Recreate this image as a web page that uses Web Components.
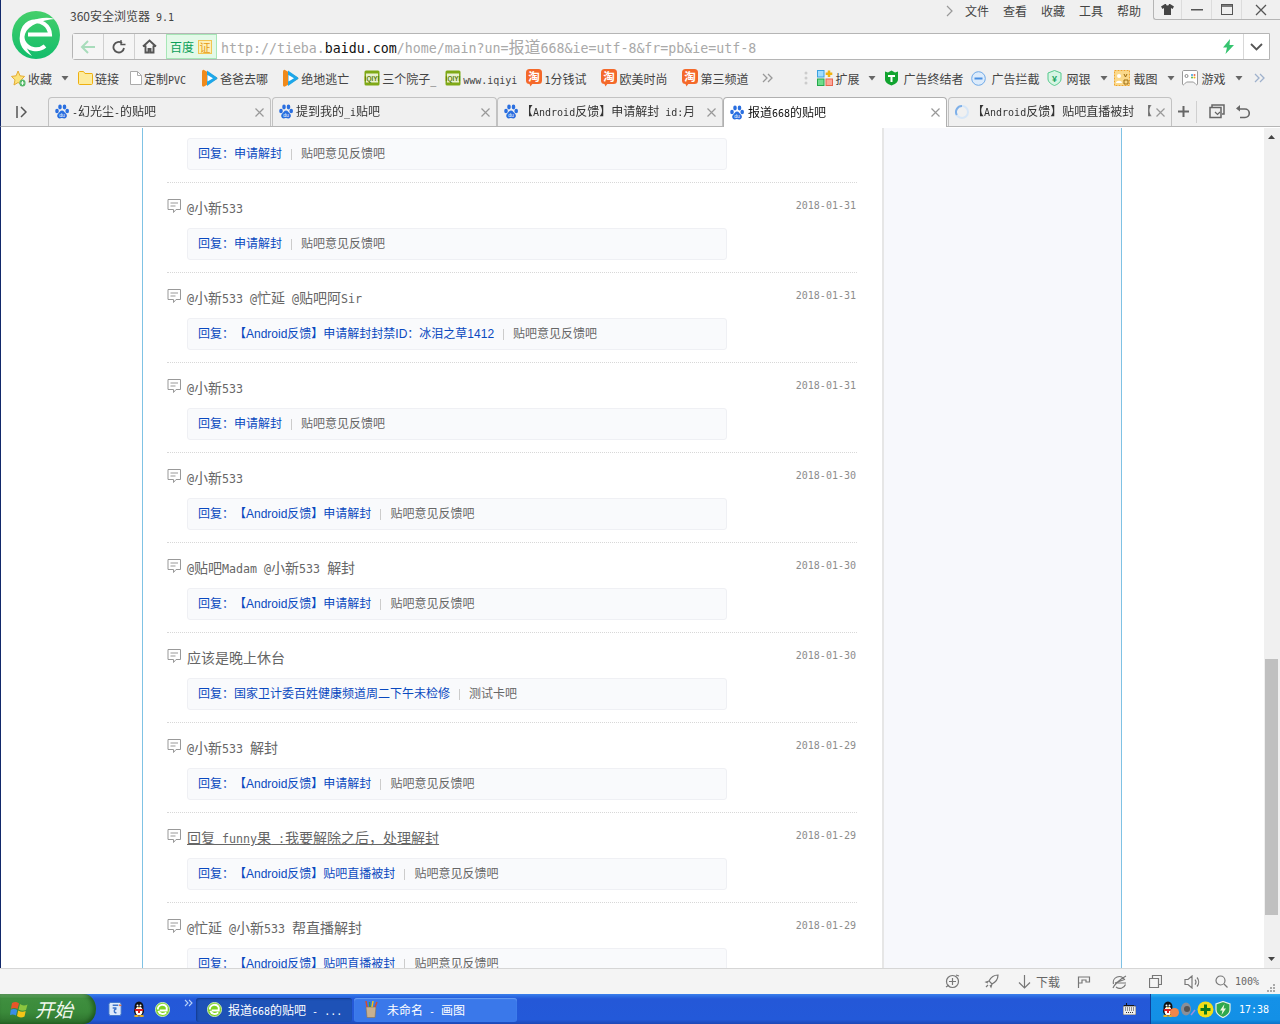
<!DOCTYPE html>
<html lang="zh">
<head>
<meta charset="utf-8">
<title>报道668的贴吧</title>
<style>
html, body { margin: 0; padding: 0; }
body {
  width: 1280px; height: 1024px; overflow: hidden;
  display: flex; flex-direction: column;
  font: 12px "Noto Sans CJK SC", sans-serif; color: #444;
  text-spacing-trim: space-all;
}
.m { font: 10px "DejaVu Sans Mono", monospace; white-space: pre; }
.t .m { font-size: 11.65px; }
.s { font-family: "Liberation Sans", "Noto Sans CJK SC", sans-serif; }
.u { text-decoration: underline; }
a-link { color: #0a49bf; }
</style>
</head>
<body>
<title-strip></title-strip>
<fav-bar>
  <fav-item icon="star" text="收藏" caret="1" style="margin-left:10px"></fav-item>
  <fav-item icon="folder" text="链接" style="margin-left:8px"></fav-item>
  <fav-item icon="file" text="定制PVC" style="margin-left:11px"></fav-item>
  <fav-item icon="video" text="爸爸去哪" style="margin-left:15px"></fav-item>
  <fav-item icon="video" text="绝地逃亡" style="margin-left:14px"></fav-item>
  <fav-item icon="iqiyi" text="三个院子_" style="margin-left:15px"></fav-item>
  <fav-item icon="iqiyi" text="www.iqiyi" style="margin-left:9px"></fav-item>
  <fav-item icon="tao" text="1分钱试" style="margin-left:9px"></fav-item>
  <fav-item icon="tao" text="欧美时尚" style="margin-left:15px"></fav-item>
  <fav-item icon="tao" text="第三频道" style="margin-left:15px"></fav-item>
  <fav-item icon="more" style="margin-left:14px"></fav-item>
  <fav-item icon="dots" style="margin-left:31px"></fav-item>
  <fav-item icon="ext" text="扩展" caret="1" style="margin-left:9px"></fav-item>
  <fav-item icon="shield" text="广告终结者" style="margin-left:7px;--tgap:4px"></fav-item>
  <fav-item icon="minus" text="广告拦截" style="margin-left:8px;--tgap:5px"></fav-item>
  <fav-item icon="bank" text="网银" caret="1" style="margin-left:7px;--tgap:5px"></fav-item>
  <fav-item icon="shot" text="截图" caret="1" style="margin-left:5px;--tgap:4px"></fav-item>
  <fav-item icon="game" text="游戏" caret="1" style="margin-left:6px;--tgap:4px"></fav-item>
  <fav-item icon="more2" style="margin-left:10px"></fav-item>
</fav-bar>
<tab-strip>
  <tab-item icon="paw" text="-幻光尘-的贴吧" style="width:223px;margin-left:0"></tab-item>
  <tab-item icon="paw" text="提到我的_i贴吧" style="width:225px;margin-left:1px"></tab-item>
  <tab-item icon="paw" text="【Android反馈】申请解封 id:月" style="width:226px;margin-left:0"></tab-item>
  <tab-item icon="paw" text="报道668的贴吧" active style="width:224px;margin-left:0"></tab-item>
  <tab-item icon="spin" text="【Android反馈】贴吧直播被封 【" style="width:224px;margin-left:1px"></tab-item>
</tab-strip>
<page-view>
  <feed-item clipped>
    <a-link slot="link">回复：申请解封</a-link><span slot="forum">贴吧意见反馈吧</span>
  </feed-item>
  <feed-item date="2018-01-31">
    <span class="t"><span class="m">@</span>小新<span class="m">533</span></span>
    <a-link slot="link">回复：申请解封</a-link><span slot="forum">贴吧意见反馈吧</span>
  </feed-item>
  <feed-item date="2018-01-31">
    <span class="t"><span class="m">@</span>小新<span class="m">533 @</span>忙延<span class="m"> @</span>贴吧阿<span class="m">Sir</span></span>
    <a-link slot="link" class="s">回复：【Android反馈】申请解封封禁ID：冰泪之草1412</a-link><span slot="forum">贴吧意见反馈吧</span>
  </feed-item>
  <feed-item date="2018-01-31">
    <span class="t"><span class="m">@</span>小新<span class="m">533</span></span>
    <a-link slot="link">回复：申请解封</a-link><span slot="forum">贴吧意见反馈吧</span>
  </feed-item>
  <feed-item date="2018-01-30">
    <span class="t"><span class="m">@</span>小新<span class="m">533</span></span>
    <a-link slot="link" class="s">回复：【Android反馈】申请解封</a-link><span slot="forum">贴吧意见反馈吧</span>
  </feed-item>
  <feed-item date="2018-01-30">
    <span class="t"><span class="m">@</span>贴吧<span class="m">Madam @</span>小新<span class="m">533 </span>解封</span>
    <a-link slot="link" class="s">回复：【Android反馈】申请解封</a-link><span slot="forum">贴吧意见反馈吧</span>
  </feed-item>
  <feed-item date="2018-01-30">
    <span class="t">应该是晚上休台</span>
    <a-link slot="link">回复：国家卫计委百姓健康频道周二下午未检修</a-link><span slot="forum">测试卡吧</span>
  </feed-item>
  <feed-item date="2018-01-29">
    <span class="t"><span class="m">@</span>小新<span class="m">533 </span>解封</span>
    <a-link slot="link" class="s">回复：【Android反馈】申请解封</a-link><span slot="forum">贴吧意见反馈吧</span>
  </feed-item>
  <feed-item date="2018-01-29">
    <span class="t u">回复<span class="m"> funny</span>果<span class="m"> :</span>我要解除之后，处理解封</span>
    <a-link slot="link" class="s">回复：【Android反馈】贴吧直播被封</a-link><span slot="forum">贴吧意见反馈吧</span>
  </feed-item>
  <feed-item date="2018-01-29">
    <span class="t"><span class="m">@</span>忙延<span class="m"> @</span>小新<span class="m">533 </span>帮直播解封</span>
    <a-link slot="link" class="s">回复：【Android反馈】贴吧直播被封</a-link><span slot="forum">贴吧意见反馈吧</span>
  </feed-item>
</page-view>
<status-strip></status-strip>
<task-bar></task-bar>

<script>
// latin runs get the narrow mono face, like the bitmap font on the original
function mix(s) {
  return s.replace(/[\x20-\x7e]+/g, m => `<span class="m">${m}</span>`);
}
const monoCss = `.m{font-family:"DejaVu Sans Mono",monospace;font-size:10px;white-space:pre}`;

const logo = (s) => `<svg width="${s}" height="${s}" viewBox="0 0 48 48">
  <defs><linearGradient id="lg" x1="0" y1="0" x2="0" y2="1"><stop offset="0" stop-color="#45cf6a"/><stop offset="1" stop-color="#12bd6c"/></linearGradient></defs>
  <circle cx="24" cy="24" r="24" fill="url(#lg)"/>
  <path d="M16 23.500H38A14 14 0 1 0 33 35" fill="none" stroke="#fff" stroke-width="4"/>
  <path d="M43 8C30 4 12 10 8 24c-2 9 4 17 12 21-6-7-9-15-7-22C16 14 30 9 43 8z" fill="#fff"/>
</svg>`;

const paw = `<svg width="16" height="16" viewBox="0 0 16 16" fill="#2a6fe0"><ellipse cx="3" cy="7" rx="1.800" ry="2.300"/><ellipse cx="6" cy="3" rx="1.800" ry="2.400"/><ellipse cx="10.500" cy="3" rx="1.800" ry="2.400"/><ellipse cx="13.200" cy="7" rx="1.800" ry="2.300"/><path d="M8 6.500c-2 0-2.500 2-4 3.300-1.500 1.500-.8 4.700 1.800 4.700 1 0 1.500-.4 2.200-.4s1.300.4 2.300.4c2.600 0 3.300-3.200 1.800-4.700C10.600 8.500 10 6.500 8 6.500z"/><text x="8" y="13" font-size="5" text-anchor="middle" fill="#fff" font-family="Liberation Sans">du</text></svg>`;
const spin = `<svg width="16" height="16" viewBox="0 0 16 16" fill="none"><circle cx="8" cy="8" r="6" stroke="#d6e6f7" stroke-width="2"/><path d="M8 2a6 6 0 0 0-5.200 9" stroke="#7fb0e8" stroke-width="2"/></svg>`;
const caret = `<svg width="10" height="5" viewBox="0 0 10 5"><path d="M1.500 0h7L5 4.500z" fill="#666"/></svg>`;
const play = `<svg width="17" height="18" viewBox="0 0 17 18"><path d="M3 1l13 7.500a1 1 0 0 1 0 1.500L3 17.500C1.500 18 1 17 1 16V3c0-1.500 1-2.500 2-2z" fill="#f08a1c"/><path d="M6 1.500l10 7a1 1 0 0 1 0 1.500L6 17z" fill="#1da7ea"/><path d="M6.500 6l5.500 3.200L6.500 12.500z" fill="#fff"/></svg>`;
const iqiyi = `<svg width="16" height="16" viewBox="0 0 16 16"><rect x=".5" y=".5" width="15" height="15" rx="1.500" fill="#7fa916"/><rect x="2" y="3.500" width="12" height="9" fill="#e9f0cf"/><text x="8" y="10.500" font-size="6.500" text-anchor="middle" fill="#5a7d08" font-family="Liberation Sans" font-weight="bold">iQIYI</text></svg>`;
const tao = `<svg width="16" height="18" viewBox="0 0 16 18"><rect width="16" height="15" rx="3.500" fill="#f4692a"/><path d="M3 14h4l-2.500 3.500z" fill="#f4692a"/><text x="8" y="12" font-size="11.500" text-anchor="middle" fill="#fff" font-family="Noto Sans CJK SC" font-weight="bold">淘</text></svg>`;
const favIcons = {
  star: `<svg width="15" height="17" viewBox="0 0 17 17" preserveAspectRatio="none"><path d="M8 1l2.200 4.800 5.200.6-3.900 3.500 1.100 5.100L8 12.500 3.400 15l1.100-5.100L.6 6.400l5.200-.6z" fill="#fbe27a" stroke="#e3a72a"/><circle cx="13" cy="13" r="3.500" fill="#55b96a"/><path d="M13 11v4M11 13h4" stroke="#fff"/></svg>`,
  folder: `<svg width="15" height="14" viewBox="0 0 15 14"><path d="M.5 2c0-1 .5-1.500 1.500-1.500h3.500L7 2.500h7c.5 0 .5.500.5 1v9c0 .5-.5 1-1 1h-12c-.5 0-1-.5-1-1z" fill="#fdeb9c" stroke="#eeb011"/></svg>`,
  file: `<svg width="12" height="14" viewBox="0 0 12 14"><path d="M.5.500h7l4 4v9H.5z" fill="#fff" stroke="#aaa"/><path d="M7.500.500v4h4" fill="none" stroke="#aaa"/></svg>`,
  video: play, iqiyi, tao,
  more: `<svg width="11" height="10" viewBox="0 0 11 10" fill="none" stroke="#999" stroke-width="1.300"><path d="M1 1l4 4-4 4M6 1l4 4-4 4"/></svg>`,
  more2: `<svg width="11" height="10" viewBox="0 0 11 10" fill="none" stroke="#9fb1cc" stroke-width="1.300"><path d="M1 1l4 4-4 4M6 1l4 4-4 4"/></svg>`,
  dots: `<svg width="4" height="14" viewBox="0 0 4 14" fill="#ccc"><circle cx="2" cy="2" r="1.500"/><circle cx="2" cy="7" r="1.500"/><circle cx="2" cy="12" r="1.500"/></svg>`,
  ext: `<svg width="16" height="16" viewBox="0 0 16 16"><rect x=".5" y=".5" width="6.500" height="6.500" fill="#9fdcff" stroke="#3aa0e0"/><rect x=".5" y="9" width="6.500" height="6.500" fill="#6fdc8c" stroke="#25a84c"/><rect x="9" y="9" width="6.500" height="6.500" fill="#fca79a" stroke="#e8654f"/><path d="M12 .5v6.500M8.700 3.700h6.600" stroke="#f0b310" stroke-width="2.500"/></svg>`,
  shield: `<svg width="15" height="16" viewBox="0 0 15 16"><path d="M1 1.500l3 1 3.500-2 3.500 2 3-1v8c0 3-3.500 5-6.500 6-3-1-6.500-3-6.500-6z" fill="#11a32f"/><path d="M4 5h7v2H8.500v5h-2V7H4z" fill="#fff"/></svg>`,
  minus: `<svg width="15" height="15" viewBox="0 0 15 15"><circle cx="7.500" cy="7.500" r="6.800" fill="#dcebfb" stroke="#6ea9e8"/><rect x="3.500" y="6.500" width="8" height="2" fill="#4a90e2"/></svg>`,
  bank: `<svg width="15" height="16" viewBox="0 0 15 16"><path d="M7.500.500l6.500 2.500v6c0 3-3.500 5.500-6.500 6.500C4.500 14.500 1 12 1 9V3z" fill="#d7f5e4" stroke="#55c98c"/><text x="7.500" y="11.500" font-size="9" text-anchor="middle" fill="#1aa45f" font-family="Liberation Sans" font-weight="bold">¥</text></svg>`,
  shot: `<svg width="16" height="16" viewBox="0 0 16 16"><rect x=".5" y=".5" width="15" height="15" fill="#fbd98a" stroke="#f0a52a" stroke-dasharray="2 1"/><circle cx="5" cy="6" r="2" fill="#fff"/><path d="M2 13c0-3 6-3 6 0z" fill="#fff"/><path d="M10 4l1.500 3L13 4M10 10h4v4h-4z" fill="none" stroke="#9a6a10"/></svg>`,
  game: `<svg width="16" height="16" viewBox="0 0 16 16"><path d="M2 .5h12c1 0 1.500.5 1.500 1.500v12c0 .8-1 1.200-1.500.5L11.500 12h-7L2 14.500c-.5.700-1.500.3-1.500-.5V2C.5 1 1 .5 2 .5z" fill="#fff" stroke="#999"/><circle cx="4.500" cy="6" r="1.500" fill="none" stroke="#888"/><circle cx="10" cy="5" r="1" fill="#3aa0e0"/><circle cx="12.500" cy="5" r="1" fill="#e8654f"/><circle cx="10" cy="7.500" r="1" fill="#59b84c"/><circle cx="12.500" cy="7.500" r="1" fill="#f0b310"/></svg>`
};

class TitleStrip extends HTMLElement {
  constructor() {
    super();
    this.attachShadow({ mode: 'open' }).innerHTML = `
    <style>
      ${monoCss}
      :host { display: grid; grid-template-columns: 71px 1fr; grid-template-rows: 33px 27px; height: 60px; background: #f0f0f0; border-left: 1px solid #12296b; box-sizing: border-box; color: #444; font: 12px "Noto Sans CJK SC", sans-serif; }
      .logo { grid-row: 1 / 3; padding: 11px 0 0 11px; }
      .top { display: flex; align-items: flex-start; }
      .name { margin: 7px 0 0 -2px; flex: 1; line-height: 17px; }
      .menu { display: flex; gap: 14px; margin: 2px 12px 0 0; line-height: 17px; align-items: center; }
      .menu svg { margin-right: -2px; }
      .win { display: flex; height: 20px; box-sizing: border-box; border: 1px solid #b5b5b5; border-top: 0; border-right: 0; border-bottom-left-radius: 3px; width: 127px; }
      .win div { display: flex; align-items: center; justify-content: center; border-right: 1px solid #dcdcdc; }
      .win div:last-child { border: 0; flex: 1; }
      .addr { display: flex; align-items: stretch; height: 27px; box-sizing: border-box; margin-right: 10px; border: 1px solid #b5b5b5; border-radius: 3px 0 0 3px; background: #fff; }
      .nav { width: 30px; display: flex; align-items: center; justify-content: center; background: #f5f5f5; border-right: 1px solid #d0d0d0; }
      .nav.home { width: 31px; border: 0; padding-right: 2px; box-sizing: border-box; }
      .badge { display: flex; align-items: center; gap: 4px; width: 51px; box-sizing: border-box; padding-left: 3px; background: #e3f9e8; border: 1px solid #a7e7b7; color: #0b9f57; }
      .cert { width: 14px; height: 14px; line-height: 13px; box-sizing: border-box; text-align: center; font-size: 11px; background: #fdf0b8; border: 1px solid #f2c552; color: #e69a14; }
      .url { flex: 1; padding-left: 4px; font-size: 13.28px; line-height: 24px; color: #a9a9a9; white-space: nowrap; }
      .url .m { font-size: 13.28px; }
      .url b { font-weight: normal; color: #111; }
      .url i { font-style: normal; font-size: 16px; }
      .bolt { display: flex; align-items: center; justify-content: center; width: 29px; }
      .drop { display: flex; align-items: center; justify-content: center; width: 25px; border-left: 1px solid #d8d8d8; }
    </style>
    <div class="logo">${logo(48)}</div>
    <div class="top">
      <div class="name">360安全浏览器<span class="m"> 9.1</span></div>
      <div class="menu">
        <svg width="7" height="12" viewBox="0 0 7 12" fill="none" stroke="#999" stroke-width="1.200"><path d="M1 1l5 5-5 5"/></svg>
        <span>文件</span><span>查看</span><span>收藏</span><span>工具</span><span>帮助</span>
      </div>
      <div class="win">
        <div style="width:27px"><svg width="13" height="11" viewBox="0 0 13 11"><path d="M4 0L0 2.500 1.500 5 3 4v7h7V4l1.500 1L13 2.500 9 0H8a1.500 1.500 0 0 1-3 0z" fill="#444"/></svg></div>
        <div style="width:29px"><svg width="12" height="2" viewBox="0 0 12 2"><rect y="0" width="12" height="1.500" fill="#555"/></svg></div>
        <div style="width:29px"><svg width="12" height="11" viewBox="0 0 12 11" fill="none" stroke="#555"><rect x=".5" y=".5" width="11" height="10"/><path d="M0 2h12" stroke-width="1.500"/></svg></div>
        <div><svg width="12" height="12" viewBox="0 0 12 12" stroke="#555" stroke-width="1.300"><path d="M1 1l10 10M11 1L1 11"/></svg></div>
      </div>
    </div>
    <div class="addr">
      <div class="nav"><svg width="16" height="14" viewBox="0 0 16 14" fill="none" stroke="#a8dcbb" stroke-width="2"><path d="M15 7H2M8 1L2 7l6 6"/></svg></div>
      <div class="nav"><svg width="14" height="14" viewBox="0 0 14 14" fill="none" stroke="#555" stroke-width="1.800"><path d="M12 8a5.300 5.300 0 1 1-2-5"/><path d="M9 0v4.500h4.500" stroke-width="1.300"/></svg></div>
      <div class="nav home"><svg width="15" height="15" viewBox="0 0 15 15" fill="none" stroke="#555" stroke-width="1.900"><path d="M1 7.500L7.500 1.500 14 7.500M3.500 6.500V13.500h3V10h2v3.500h3V6.500"/></svg></div>
      <div class="badge"><span>百度</span><span class="cert">证</span></div>
      <div class="url"><span class="m">http://tieba.<b>baidu.com</b>/home/main?un=</span><i>报道</i><span class="m">668&amp;ie=utf-8&amp;fr=pb&amp;ie=utf-8</span></div>
      <div class="bolt"><svg width="13" height="15" viewBox="0 0 13 15"><path d="M8 0L1 8.500h4L3.500 15 12 6H7.500z" fill="#35c46f"/></svg></div>
      <div class="drop"><svg width="13" height="8" viewBox="0 0 13 8" fill="none" stroke="#555" stroke-width="1.800"><path d="M1 1l5.500 5.500L12 1"/></svg></div>
    </div>`;
  }
}
customElements.define('title-strip', TitleStrip);

class FavBar extends HTMLElement {
  constructor() {
    super();
    this.attachShadow({ mode: 'open' }).innerHTML = `
    <style>:host { display: flex; align-items: center; height: 37px; padding-bottom: 1px; box-sizing: border-box; background: #f0f0f0; border-left: 1px solid #12296b; }</style><slot></slot>`;
  }
}
customElements.define('fav-bar', FavBar);

class FavItem extends HTMLElement {
  connectedCallback() {
    if (this.shadowRoot) return;
    const text = this.getAttribute('text');
    const hasCaret = this.hasAttribute('caret');
    this.attachShadow({ mode: 'open' }).innerHTML = `
    <style>
      ${monoCss}
      :host { display: inline-flex; align-items: center; gap: var(--tgap, 2px); color: #444; font: 12px "Noto Sans CJK SC", sans-serif; white-space: nowrap; flex: none; }
      svg { display: block; }
      .c { margin-left: calc(8px - var(--tgap, 2px)); }
    </style>
    ${favIcons[this.getAttribute('icon')] || ''}
    ${text ? `<span>${mix(text)}</span>` : ''}
    ${hasCaret ? `<span class="c">${caret}</span>` : ''}`;
  }
}
customElements.define('fav-item', FavItem);

class TabStrip extends HTMLElement {
  constructor() {
    super();
    this.attachShadow({ mode: 'open' }).innerHTML = `
    <style>
      :host { display: flex; align-items: flex-end; height: 30px; box-sizing: border-box; background: #f0f0f0; border-left: 1px solid #12296b; border-bottom: 1px solid #b5b5b5; }
      .side { width: 47px; align-self: center; padding-left: 15px; box-sizing: border-box; }
      .tail { display: flex; align-items: center; align-self: center; margin-left: 5px; }
      .div { width: 1px; height: 22px; background: #d0d0d0; margin: 0 12px 0 6px; }
      svg { display: block; }
    </style>
    <div class="side"><svg width="11" height="12" viewBox="0 0 11 12" fill="none" stroke="#555" stroke-width="1.500"><path d="M1 0v12"/><path d="M5 1l5 5-5 5"/></svg></div>
    <slot></slot>
    <div class="tail">
      <svg width="13" height="13" viewBox="0 0 13 13" stroke="#666" stroke-width="2"><path d="M6.500 1v11M1 6.500h11"/></svg>
      <div class="div"></div>
      <svg width="16" height="15" viewBox="0 0 16 15" fill="none" stroke="#666" stroke-width="1.500"><path d="M3 3V1h12v9h-2"/><path d="M1 3.500h11v10H1z"/><path d="M6 8l2.500 2.500L11 8" stroke-width="1.200"/></svg>
      <svg style="margin-left:10px" width="15" height="14" viewBox="0 0 15 14" fill="none" stroke="#666" stroke-width="1.600"><path d="M5 4h5a4 4 0 0 1 0 8.500H5"/><path d="M5 0v6.500L1 3.500z" fill="#666" stroke="none"/></svg>
    </div>`;
  }
}
customElements.define('tab-strip', TabStrip);

class TabItem extends HTMLElement {
  connectedCallback() {
    if (this.shadowRoot) return;
    const icon = this.getAttribute('icon') === 'spin' ? spin : paw;
    this.attachShadow({ mode: 'open' }).innerHTML = `
    <style>
      ${monoCss}
      :host { display: flex; align-items: center; height: 29px; box-sizing: border-box; flex: none; padding-left: 5px; padding-right: 6px; border: 1px solid #c2c2c2; border-bottom: 0; border-radius: 4px 4px 0 0; background: #f0f0f0; color: #333; font: 12px "Noto Sans CJK SC", sans-serif; }
      :host([active]) { background: #fff; color: #111; height: 30px; margin-bottom: -1px; border-color: #b0b0b0; }
      :host([active]) .txt { margin-left: 3px; }
      :host([icon="spin"]) .txt { margin-right: 1px; }
      .txt { flex: 1; min-width: 0; margin-left: 2px; margin-right: 8px; overflow: hidden; white-space: nowrap; line-height: 26px; -webkit-mask-image: linear-gradient(to left, transparent, #000 8px); mask-image: linear-gradient(to left, transparent, #000 8px); }
      svg { display: block; flex: none; }
    </style>
    ${icon}
    <div class="txt">${mix(this.getAttribute('text'))}</div>
    <svg width="9" height="9" viewBox="0 0 9 9" stroke="#999" stroke-width="1.200"><path d="M.5.500l8 8M8.500.500l-8 8"/></svg>`;
  }
}
customElements.define('tab-item', TabItem);

class PageView extends HTMLElement {
  constructor() {
    super();
    this.attachShadow({ mode: 'open' }).innerHTML = `
    <style>
      :host { display: flex; flex: 1; min-height: 0; background: #fff; border-left: 1px solid #12296b; overflow: hidden; }
      .wrap { display: flex; width: 980px; box-sizing: border-box; margin-left: 141px; margin-top: 1px; border-left: 1px solid #7fc2e4; border-right: 1px solid #7fc2e4; }
      .list { width: 690px; margin-left: 24px; margin-top: -1px; flex: none; }
      .side { width: 239px; margin-left: 25px; flex: none; background: #f7f8fc; border-left: 2px solid #e6e6e6; box-sizing: border-box; }
      .bar { margin-left: 142px; margin-top: 1px; width: 16px; flex: none; background: #f0f0f0; position: relative; }
      .thumb { position: absolute; left: 1px; width: 13px; top: 531px; height: 256px; background: #c0c0c0; }
      .up { position: absolute; left: 4px; top: 7px; }
      .dn { position: absolute; left: 4px; bottom: 7px; }
    </style>
    <div class="wrap">
      <div class="list"><slot></slot></div>
      <div class="side"></div>
    </div>
    <div class="bar">
      <svg class="up" width="7" height="4" viewBox="0 0 7 4"><path d="M3.500 0L7 4H0z" fill="#444"/></svg>
      <div class="thumb"></div>
      <svg class="dn" width="7" height="4" viewBox="0 0 7 4"><path d="M0 0h7L3.500 4z" fill="#444"/></svg>
    </div>`;
  }
}
customElements.define('page-view', PageView);

class ALink extends HTMLElement {
  constructor() {
    super();
    this.attachShadow({ mode: 'open' }).innerHTML = `<style>:host { display: inline; }</style><slot></slot>`;
  }
}
customElements.define('a-link', ALink);

class FeedItem extends HTMLElement {
  connectedCallback() {
    if (this.shadowRoot) return;
    this.attachShadow({ mode: 'open' }).innerHTML = `
    <style>
      ${monoCss}
      :host { display: block; height: 90px; box-sizing: border-box; border-bottom: 1px dotted #d8d8d8; font: 12px "Noto Sans CJK SC", sans-serif; color: #666; }
      :host([clipped]) { height: 56px; padding-top: 11px; }
      :host([clipped]) .head { display: none; }
      .head { display: flex; height: 45px; box-sizing: border-box; padding-top: 14px; align-items: flex-start; }
      .icon { width: 14px; margin: 2px 6px 0 0; flex: none; }
      .title { flex: 1; font-size: 14px; line-height: 20px; color: #666; }
      .date { margin: -1px 1px 0 0; line-height: 16px; color: #8c8c8c; }
      .box { display: flex; align-items: center; height: 32px; width: 540px; margin-left: 20px; padding: 0 0 4px 10px; box-sizing: border-box; background: #f9fafc; border: 1px solid #eff0f4; border-radius: 3px; }
      .sep { width: 1px; height: 11px; background: #ccc; margin: 4px 9px 0; }
    </style>
    <div class="head">
      <svg class="icon" width="14" height="14" viewBox="0 0 14 14" fill="none" stroke="#999"><path d="M1 .5h12.500v10H9L6.500 13.500V10.500H1z"/><path d="M3.500 4h7.500M3.500 7h5"/></svg>
      <div class="title"><slot></slot></div>
      <div class="date">${mix(this.getAttribute('date') || '')}</div>
    </div>
    <div class="box"><slot name="link"></slot><span class="sep"></span><slot name="forum"></slot></div>`;
  }
}
customElements.define('feed-item', FeedItem);

class StatusStrip extends HTMLElement {
  constructor() {
    super();
    this.attachShadow({ mode: 'open' }).innerHTML = `
    <style>
      ${monoCss}
      :host { display: flex; align-items: center; justify-content: flex-end; height: 26px; box-sizing: border-box; padding-right: 4px; background: #f4f4f4; border-top: 1px solid #d6d6d6; color: #666; font: 12px "Noto Sans CJK SC", sans-serif; }
      svg { display: block; flex: none; }
      .g { stroke: #777; fill: none; stroke-width: 1.200; }
    </style>
    <svg class="g" width="15" height="15" viewBox="0 0 15 15"><circle cx="7.500" cy="7.500" r="6"/><path d="M7.500 4v7M4 7.500h7M1 13l3-2M11 1l3 1"/></svg>
    <svg class="g" style="margin-left:24px" width="15" height="15" viewBox="0 0 15 15"><path d="M14 1c-4 0-7 2-9 6l3 3c4-2 6-5 6-9zM5 7L2 8l2 1M8 10l-1 3-1-2M4 11l-2 2"/></svg>
    <svg class="g" style="margin-left:19px" width="13" height="14" viewBox="0 0 13 14"><path d="M6.500 0v13M1 7.500l5.500 5.500L12 7.500"/></svg>
    <span style="margin-left:5px">下载</span>
    <svg class="g" style="margin-left:17px" width="14" height="12" viewBox="0 0 14 12"><path d="M1.500 12V1h11v5H9V4H5v3H1.500"/></svg>
    <svg class="g" style="margin-left:21px" width="15" height="14" viewBox="0 0 15 14"><path d="M1.500 9a6 6 0 0 1 11-4.500L3 8h11M13.500 9.500A6 6 0 0 1 4 12M1 13c1-3 7-9 13-12"/></svg>
    <svg class="g" style="margin-left:22px" width="13" height="13" viewBox="0 0 13 13"><path d="M3.500 3.500v-3h9v9h-3M.5 3.500h9v9h-9z"/></svg>
    <svg class="g" style="margin-left:22px" width="16" height="14" viewBox="0 0 16 14"><path d="M1 4.500v5h3l4 3.500v-12l-4 3.500zM11 4.500a4 4 0 0 1 0 5M13 2.500a7 7 0 0 1 0 9"/></svg>
    <svg class="g" style="margin-left:15px" width="13" height="13" viewBox="0 0 13 13"><circle cx="5.500" cy="5.500" r="4.500"/><path d="M9 9l3.500 3.500"/></svg>
    <span class="m" style="margin-left:7px">100%</span>
    <svg style="margin-left:8px;align-self:flex-end;margin-bottom:1px" width="9" height="9" viewBox="0 0 9 9" fill="#aaa"><rect x="6" y="0" width="2" height="2"/><rect x="3" y="3" width="2" height="2"/><rect x="6" y="3" width="2" height="2"/><rect x="0" y="6" width="2" height="2"/><rect x="3" y="6" width="2" height="2"/><rect x="6" y="6" width="2" height="2"/></svg>`;
  }
}
customElements.define('status-strip', StatusStrip);

const penguin = (s) => `<svg width="${s}" height="${s}" viewBox="0 0 16 16"><ellipse cx="8" cy="6" rx="4.500" ry="5.500" fill="#111"/><ellipse cx="8" cy="10" rx="5" ry="5" fill="#111"/><ellipse cx="8" cy="10" rx="3.500" ry="4.200" fill="#fff"/><path d="M3.500 8h9l-.5 2H9v2H7v-2H4z" fill="#d92020"/><ellipse cx="5.500" cy="15" rx="2.500" ry="1" fill="#f2b518"/><ellipse cx="10.500" cy="15" rx="2.500" ry="1" fill="#f2b518"/><circle cx="6.500" cy="4.500" r="1" fill="#fff"/><circle cx="9.500" cy="4.500" r="1" fill="#fff"/><path d="M6.500 6.200h3L8 7.500z" fill="#f2b518"/></svg>`;
const smallE = `<svg width="15" height="15" viewBox="0 0 16 16"><circle cx="8" cy="8" r="7.500" fill="#7ed321" stroke="#d5f0c0"/><path d="M3 8a5 5 0 0 1 9.500-2.200V9H5" fill="none" stroke="#fff" stroke-width="2"/><path d="M3.500 9.500a5 5 0 0 0 8.500 1.500" fill="none" stroke="#fff" stroke-width="2"/></svg>`;

class TaskBar extends HTMLElement {
  constructor() {
    super();
    this.attachShadow({ mode: 'open' }).innerHTML = `
    <style>
      ${monoCss}
      :host { display: flex; align-items: stretch; height: 30px; background: linear-gradient(#3a80ec 0, #2a66e0 3px, #2458d8 5px, #2359d9 85%, #1c48b5 100%); color: #fff; font: 12px "Noto Sans CJK SC", sans-serif; }
      .start { width: 96px; display: flex; align-items: center; box-sizing: border-box; padding-left: 10px; gap: 5px; background: linear-gradient(#6bae6b 0, #3f8f3f 15%, #3a8a3a 60%, #2c6f2c 100%); border-radius: 0 12px 12px 0 / 0 50% 50% 0; box-shadow: inset -3px 0 4px rgba(0,40,0,.45); }
      .start span { font-style: italic; font-size: 19px; line-height: 28px; color: #f0f7ee; }
      .quick { display: flex; align-items: center; width: 100px; padding-left: 12px; box-sizing: border-box; gap: 8px; }
      .more { align-self: flex-start; margin: 5px 0 0 6px; }
      .btn { display: flex; align-items: center; margin-top: 4px; height: 24px; box-sizing: border-box; border-radius: 3px; padding-bottom: 2px; gap: 6px; white-space: nowrap; }
      .b1 { width: 156px; background: #1e52b7; box-shadow: inset 1px 1px 2px #123a8c; padding-left: 11px; }
      .b2 { width: 163px; margin-left: 2px; background: #3a78ea; box-shadow: inset 0 1px 1px #6a9ef2; padding-left: 10px; }
      .grow { flex: 1; display: flex; justify-content: flex-end; align-items: center; padding-right: 14px; }
      .tray { width: 130px; box-sizing: border-box; display: flex; align-items: center; padding-left: 9px; gap: 1px; background: linear-gradient(#2fb0f0 0, #1491e8 4px, #1390e6 85%, #0d72c8 100%); border-left: 1px solid #0f3f9c; }
      .peng { position: relative; width: 16px; height: 16px; flex: none; }
      .peng i { position: absolute; right: -3px; bottom: 0; width: 9px; height: 9px; border-radius: 50%; background: #f2874a; }
      svg { display: block; flex: none; }
    </style>
    <div class="start">
      <svg width="20" height="19" viewBox="0 0 20 19"><path d="M2 3c3-1.500 5-1 7 .5L7.500 9C5.500 7.800 3.500 7.500 1 8.800z" fill="#e8552a"/><path d="M10 4c2 1.500 4.500 2 7.500.5L16 10c-2.500 1.300-5 1-7.500-.5z" fill="#8cc63f"/><path d="M.8 9.800C3 8.500 5.500 9 7.200 10L6 15.500C4 14.300 2 14 0 15z" fill="#3a8ee8"/><path d="M8.200 10.500c2.500 1.500 5 1.800 7.500.6L14.500 16.500c-3 1.500-5.500 1-7.500-.5z" fill="#f5c518"/></svg>
      <span>开始</span>
    </div>
    <div class="quick">
      <svg width="15" height="16" viewBox="0 0 16 16"><rect x="1" y="1" width="13" height="14" rx="2" fill="#dfeafb" stroke="#3f74c9"/><path d="M5 4h6M5 7h4M9 12c-3 0-3-4 0-4" fill="none" stroke="#3f74c9" stroke-width="1.500"/><path d="M12 3l3 1-3 1z" fill="#e85a2a"/></svg>
      ${penguin(16)}
      ${smallE}
      <svg class="more" width="9" height="8" viewBox="0 0 9 8" fill="none" stroke="#b8d2f8" stroke-width="1.100"><path d="M1 1l3 3-3 3M5 1l3 3-3 3"/></svg>
    </div>
    <div class="btn b1">${smallE}<span>报道<span class="m">668</span>的贴吧<span class="m"> - ...</span></span></div>
    <div class="btn b2"><svg width="14" height="17" viewBox="0 0 14 17"><path d="M2 6h10l-1 10.500H3z" fill="#c8b090" stroke="#8a7050" stroke-width=".6"/><path d="M3 6L2 0M11 6l2-5" stroke-width="1.500" stroke="#d94a2a"/><path d="M6 6l-.5-5" stroke="#3a9a3a" stroke-width="1.500"/><path d="M8 6l1-6" stroke="#f2c518" stroke-width="1.500"/></svg><span style="margin-left:3px">未命名<span class="m"> - </span>画图</span></div>
    <div class="grow"><svg width="13" height="12" viewBox="0 0 13 12"><path d="M3 0h1v2h7v2H1V2h2z" fill="#111"/><rect y="3" width="13" height="9" fill="#eee" stroke="#222" stroke-width=".6"/><path d="M2 5h9M2 7h9M3 9.500h7" stroke="#333" stroke-dasharray="1 1"/></svg></div>
    <div class="tray">
      <div class="peng">${penguin(16)}<i></i></div>
      <svg style="margin-left:2px" width="17" height="17" viewBox="0 0 17 17"><ellipse cx="7" cy="8" rx="5" ry="6.500" fill="#8a8f98"/><circle cx="8" cy="8" r="3" fill="#555"/><path d="M12 14l4-5" stroke="#9a8ee0" stroke-width="1.500"/></svg>
      <svg width="17" height="17" viewBox="0 0 17 17"><circle cx="8.500" cy="8.500" r="8" fill="#f2de18"/><path d="M8.500 3.500v10M3.500 8.500h10" stroke="#0e7a1e" stroke-width="3"/></svg>
      <svg width="16" height="17" viewBox="0 0 16 17"><path d="M8 .5l7 2.500v6c0 3.500-3.500 6-7 7.500-3.500-1.500-7-4-7-7.500V3z" fill="#2fa84c" stroke="#e8f2e8" stroke-width="1.200"/><path d="M9.500 3L5 9.500h2.500L6.500 14 11 7.500H8.500z" fill="#f0f8e0"/></svg>
      <span class="m" style="margin-left:7px">17:38</span>
    </div>`;
  }
}
customElements.define('task-bar', TaskBar);
</script>
</body>
</html>
